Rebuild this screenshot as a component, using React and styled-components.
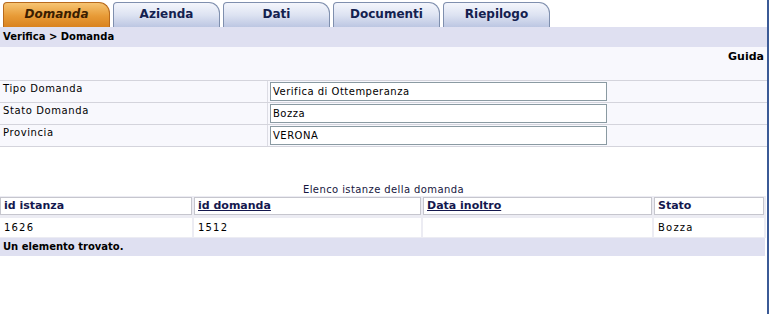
import styled, { createGlobalStyle } from 'styled-components'

const Global = createGlobalStyle`
  body {
    margin: 0;
    background: #ffffff;
    font-family: "DejaVu Sans", Verdana, sans-serif;
    color: #000;
  }
`

const Page = styled.div`
  width: 767px;
  min-height: 314px;
  border-right: 2px solid #3b5a96;
  background: #fff;
`

const TabBar = styled.div`
  display: flex;
  align-items: flex-end;
  gap: 3px;
  height: 27px;
  padding-left: 3px;
  box-sizing: border-box;
`

const Tab = styled.div`
  width: 107px;
  height: 25px;
  box-sizing: border-box;
  border: 1px solid ${p => (p.$active ? '#b86a1c' : '#7f8fae')};
  border-bottom: none;
  border-radius: 4px 11px 0 0;
  background: ${p =>
    p.$active
      ? 'linear-gradient(#f6c472, #e79a36 55%, #d9821f)'
      : 'linear-gradient(#f4f6fc, #dde3f2 50%, #bcc6e2)'};
  color: ${p => (p.$active ? '#3a1d00' : '#14214f')};
  font-size: 12px;
  font-weight: bold;
  font-style: ${p => (p.$active ? 'italic' : 'normal')};
  display: flex;
  align-items: center;
  justify-content: center;
  padding-bottom: 2px;
`

const Crumb = styled.div`
  height: 20px;
  line-height: 19px;
  background: #dfe0f1;
  font-size: 10px;
  font-weight: bold;
  padding-left: 3px;
`

const Tools = styled.div`
  height: 33px;
  background: #f8f8fd;
  text-align: right;
  font-size: 11px;
  font-weight: bold;
  padding: 3px 3px 0 0;
  box-sizing: border-box;
`

const Form = styled.div`
  background: #f8f8fd;
  border-bottom: 1px solid #d4d4dc;
`

const FormRow = styled.div`
  display: grid;
  grid-template-columns: 268px 1fr;
  height: 22px;
  box-sizing: border-box;
  border-top: 1px solid #d4d4dc;
`

const Label = styled.div`
  font-size: 10px;
  letter-spacing: 0.6px;
  padding: 2px 0 0 3px;
  border-right: 1px solid #dcdce4;
`

const Field = styled.div`
  padding: 1px 0 0 2px;
`

const Input = styled.div`
  width: 337px;
  height: 19px;
  box-sizing: border-box;
  border: 1px solid #8a9aa2;
  background: #fff;
  font-size: 10px;
  letter-spacing: 0.5px;
  line-height: 17px;
  padding-left: 2px;
`

const Caption = styled.div`
  margin-top: 36px;
  text-align: center;
  font-size: 10px;
  letter-spacing: 0.4px;
  color: #161640;
  height: 13px;
  line-height: 13px;
`

const Grid = styled.div`
  display: grid;
  grid-template-columns: 192px 227px 229px 1fr;
  column-gap: 2px;
  row-gap: 3px;
  padding: 1px 2px 1px 0;
  background: #ececf3;
  margin-right: 1px;
`

const Head = styled.div`
  height: 18px;
  box-sizing: border-box;
  background: #fff;
  border: 1px solid #c6c6ce;
  font-size: 11px;
  font-weight: bold;
  color: #14184e;
  padding: 1px 0 0 3px;
  text-decoration: ${p => (p.$link ? 'underline' : 'none')};
`

const Cell = styled.div`
  height: 19px;
  background: #fff;
  font-size: 10px;
  letter-spacing: 1.2px;
  line-height: 19px;
  padding-left: 4px;
`

const Footer = styled.div`
  height: 18px;
  line-height: 17px;
  background: #dfe0f1;
  font-size: 10px;
  font-weight: bold;
  padding-left: 3px;
  margin-right: 2px;
`

const tabs = ['Domanda', 'Azienda', 'Dati', 'Documenti', 'Riepilogo']

const fields = [
  ['Tipo Domanda', 'Verifica di Ottemperanza'],
  ['Stato Domanda', 'Bozza'],
  ['Provincia', 'VERONA'],
]

const heads = [
  ['id istanza', false],
  ['id domanda', true],
  ['Data inoltro', true],
  ['Stato', false],
]

const row = ['1626', '1512', '', 'Bozza']

export default function App() {
  return (
    <Page>
      <Global />
      <TabBar>
        {tabs.map((t, i) => (
          <Tab key={t} $active={i === 0}>{t}</Tab>
        ))}
      </TabBar>
      <Crumb>Verifica &gt; Domanda</Crumb>
      <Tools>Guida</Tools>
      <Form>
        {fields.map(([l, v]) => (
          <FormRow key={l}>
            <Label>{l}</Label>
            <Field>
              <Input>{v}</Input>
            </Field>
          </FormRow>
        ))}
      </Form>
      <Caption>Elenco istanze della domanda</Caption>
      <Grid>
        {heads.map(([h, link]) => (
          <Head key={h} $link={link}>{h}</Head>
        ))}
        {row.map((c, i) => (
          <Cell key={i}>{c}</Cell>
        ))}
      </Grid>
      <Footer>Un elemento trovato.</Footer>
    </Page>
  )
}
